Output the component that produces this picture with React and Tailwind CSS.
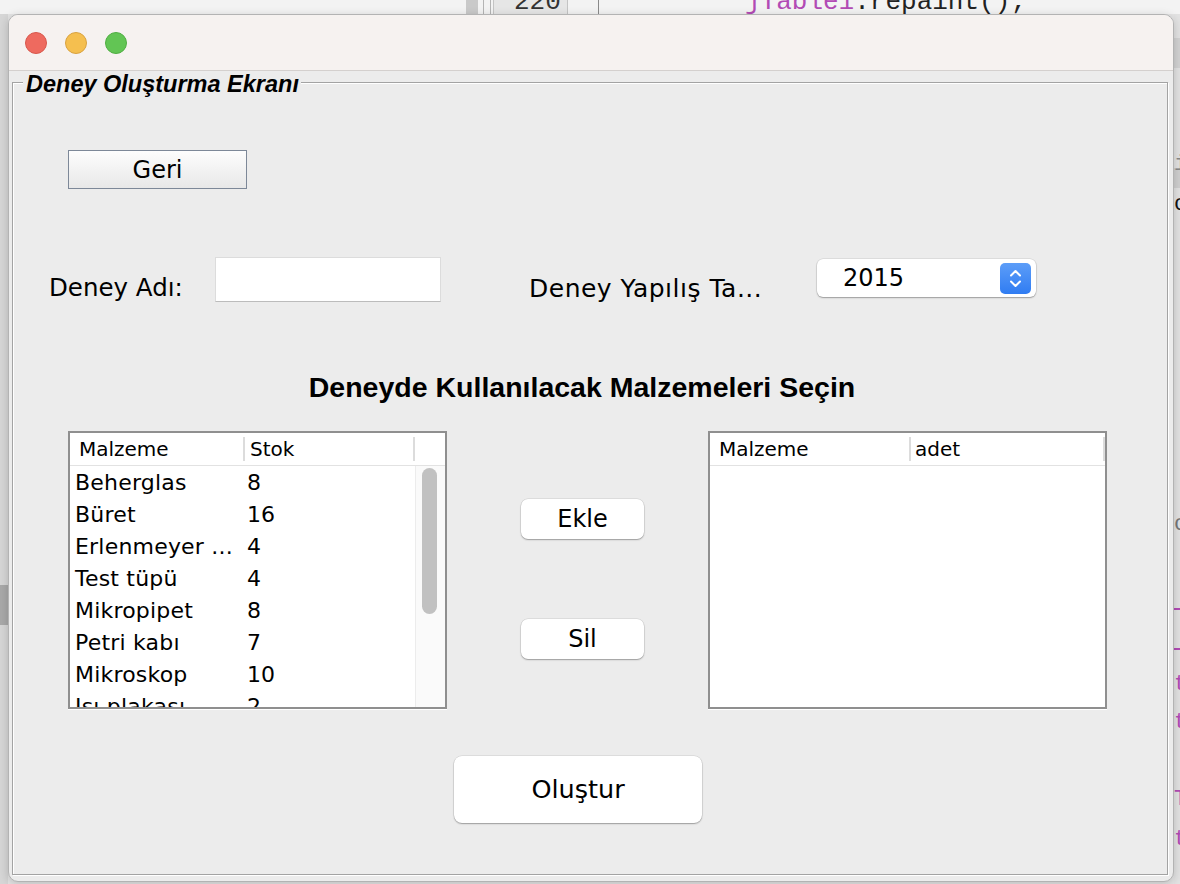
import React from 'react';

const stokRows = [
  ['Beherglas', '8'],
  ['Büret', '16'],
  ['Erlenmeyer ...', '4'],
  ['Test tüpü', '4'],
  ['Mikropipet', '8'],
  ['Petri kabı', '7'],
  ['Mikroskop', '10'],
  ['Isı plakası', '2'],
];

const MacButton = ({ children, className }) => (
  <button className={`bg-white rounded-[7px] shadow-[0_1px_1.5px_rgba(0,0,0,0.3),0_0_0_0.5px_rgba(0,0,0,0.12)] leading-none text-black ${className}`}>
    {children}
  </button>
);

const HeaderSep = () => <div className="w-[2px] h-[24px] bg-[#dcdcdc] shrink-0" />;

const App = () => {
  return (
    <div className="relative w-[1180px] h-[884px] overflow-hidden bg-[#e4e4e4] pl-[8px] pt-[14px] font-['DejaVu_Sans',sans-serif] text-black">
      {/* desktop behind the window */}
      <div className="absolute top-0 left-0 w-full h-[14px] bg-[#f3f3f3] overflow-hidden">
        <div className="absolute left-[466px] top-0 w-[12px] h-full bg-[#c9c9c9]" />
        <div className="absolute left-[483px] top-0 w-px h-full bg-[#b4b4b4]" />
        <div className="absolute left-[490px] top-0 w-px h-full bg-[#b4b4b4]" />
        <div className="absolute left-[493px] top-0 w-[75px] h-full bg-[#e6e6e6] border-x border-[#c4c4c4]" />
        <span className="absolute left-[514px] top-[-11px] font-['Liberation_Mono',monospace] text-[26px] leading-[26px] text-[#333]">220</span>
        <div className="absolute left-[598px] top-0 w-px h-full bg-[#8a8a8a]" />
        <span className="absolute left-[745px] top-[-11px] font-['Liberation_Mono',monospace] text-[26px] leading-[26px] text-[#222] whitespace-pre">
          <span className="text-[#b24bb5]">jTable1</span>.repaint();
        </span>
      </div>
      <div className="absolute left-0 top-[14px] w-[8px] h-[870px] bg-[#d6d6d6]">
        <div className="mt-[571px] h-[40px] bg-[#a9a9a9]" />
      </div>
      <div className="absolute right-0 top-[14px] w-[6px] h-[870px] bg-[#e2e2e2] overflow-hidden font-['Liberation_Mono',monospace] text-[22px] leading-[22px]">
        <div className="mt-[24px] h-[30px] bg-[#d2d2d2]" />
        <div className="mt-[100px] h-[20px] bg-[#cfcfcf]" />
        <span className="absolute left-0 top-[140px] text-[#888]">i</span>
        <span className="absolute left-0 top-[180px] text-[#111]">c</span>
        <span className="absolute left-0 top-[500px] text-[#777]">c</span>
        <div className="absolute left-0 top-[594px] w-full h-[2px] bg-[#b24bb5]" />
        <div className="absolute left-0 top-[634px] w-full h-[2px] bg-[#b24bb5]" />
        <span className="absolute left-0 top-[660px] text-[#b24bb5]">t</span>
        <span className="absolute left-0 top-[698px] text-[#b24bb5]">t</span>
        <span className="absolute left-0 top-[775px] text-[#b24bb5]">T</span>
        <span className="absolute left-0 top-[815px] text-[#b24bb5]">t</span>
      </div>

      {/* window */}
      <div className="relative w-[1166px] h-[868px] rounded-[10px] border border-[#b3b3b3] bg-[#ececec] overflow-hidden flex flex-col shadow-[0_2px_10px_rgba(0,0,0,0.18)]">
        <div className="h-[56px] shrink-0 bg-[#f6f2f0] border-b border-[#d4d0ce] flex items-center pl-[16px] gap-[18px]">
          <div className="w-[22px] h-[22px] rounded-full bg-[#ee6a5f] border border-[#d8574c]" />
          <div className="w-[22px] h-[22px] rounded-full bg-[#f5bf4f] border border-[#d9a23f]" />
          <div className="w-[22px] h-[22px] rounded-full bg-[#62c554] border border-[#4fae42]" />
        </div>

        <div className="flex-1 pl-[3px] pt-[11px] pr-[5px] pb-[6px]">
          <div className="relative h-full border border-[#a3a3a3] shadow-[inset_1px_1px_0_#fff,1px_1px_0_#fff]">
            <span className="absolute left-[10px] top-[-11px] pl-[3px] pr-[2px] bg-[#ececec] font-['Liberation_Sans',Arial,sans-serif] font-bold italic text-[23.5px] leading-[25px]">
              Deney Oluşturma Ekranı
            </span>

            <div className="flex flex-col">
              <button className="ml-[55px] mt-[67px] w-[179px] h-[39px] border border-[#7d8898] bg-gradient-to-b from-[#fdfdfd] to-[#e8e8e8] text-[24px] leading-none">
                Geri
              </button>

              <div className="flex items-start mt-[68px]">
                <span className="ml-[36px] w-[166px] mt-[17px] text-[24.5px] leading-[28px]">Deney Adı:</span>
                <div className="w-[226px] h-[45px] bg-white border border-[#dcdcdc] border-b-[#bcbcbc]" />
                <span className="ml-[88px] w-[288px] mt-[18px] text-[25px] leading-[28px] tracking-[0.5px] whitespace-nowrap">Deney Yapılış Ta...</span>
                <div className="mt-[2px] w-[219px] h-[38px] bg-white rounded-[6px] shadow-[0_1px_1.5px_rgba(0,0,0,0.3),0_0_0_0.5px_rgba(0,0,0,0.12)] flex items-center pl-[26px] pr-[5px]">
                  <span className="flex-1 text-[24px] leading-none">2015</span>
                  <div className="w-[31px] h-[31px] rounded-[5px] bg-gradient-to-b from-[#5c9df8] to-[#2f7cf2] flex items-center justify-center">
                    <svg width="31" height="31" viewBox="0 0 31 31" fill="none" stroke="#fff" strokeWidth="2" strokeLinecap="round" strokeLinejoin="round">
                      <path d="M11 12.5 L15.5 8 L20 12.5" />
                      <path d="M11 18.5 L15.5 23 L20 18.5" />
                    </svg>
                  </div>
                </div>
              </div>

              <div className="mt-[68px] w-[1138px] text-center font-['Liberation_Sans',Arial,sans-serif] font-bold text-[28.5px] leading-[32px]">
                Deneyde Kullanılacak Malzemeleri Seçin
              </div>

              <div className="flex items-start mt-[28px] ml-[55px]">
                {/* stock table */}
                <div className="w-[379px] h-[278px] border-2 border-[#8f8f8f] bg-white shadow-[0_1px_0_#fff] flex flex-col overflow-hidden">
                  <div className="h-[33px] shrink-0 border-b border-[#e2e2e2] flex items-center text-[20px]">
                    <div className="w-[175px] flex items-center justify-between pl-[9px]">
                      <span>Malzeme</span>
                      <HeaderSep />
                    </div>
                    <div className="w-[170px] flex items-center justify-between pl-[5px]">
                      <span>Stok</span>
                      <HeaderSep />
                    </div>
                  </div>
                  <div className="flex flex-1 min-h-0">
                    <div className="w-[345px] overflow-hidden">
                      {stokRows.map(([name, stok]) => (
                        <div key={name} className="h-[32px] flex items-center text-[22px] whitespace-nowrap">
                          <span className="w-[172px] pl-[5px] tracking-[0.2px]">{name}</span>
                          <span className="pl-[5px]">{stok}</span>
                        </div>
                      ))}
                    </div>
                    <div className="w-[30px] border-l border-[#ececec] bg-[#fafafa]">
                      <div className="mt-[2px] ml-[6px] w-[15px] h-[146px] rounded-full bg-[#c1c1c1]" />
                    </div>
                  </div>
                </div>

                <div className="ml-[74px] w-[123px] flex flex-col">
                  <MacButton className="mt-[68px] h-[40px] text-[24px]">Ekle</MacButton>
                  <MacButton className="mt-[80px] h-[40px] text-[24px]">Sil</MacButton>
                </div>

                {/* selected table */}
                <div className="ml-[64px] w-[399px] h-[278px] border-2 border-[#8f8f8f] bg-white shadow-[0_1px_0_#fff] flex flex-col">
                  <div className="h-[33px] shrink-0 border-b border-[#e2e2e2] flex items-center text-[20px]">
                    <div className="w-[201px] flex items-center justify-between pl-[9px]">
                      <span>Malzeme</span>
                      <HeaderSep />
                    </div>
                    <div className="w-[194px] flex items-center justify-between pl-[4px]">
                      <span>adet</span>
                      <HeaderSep />
                    </div>
                  </div>
                </div>
              </div>

              <MacButton className="mt-[47px] ml-[441px] w-[248px] h-[67px] rounded-[8px] text-[25.5px]">Oluştur</MacButton>
            </div>
          </div>
        </div>
      </div>
    </div>
  );
};

export default App;
